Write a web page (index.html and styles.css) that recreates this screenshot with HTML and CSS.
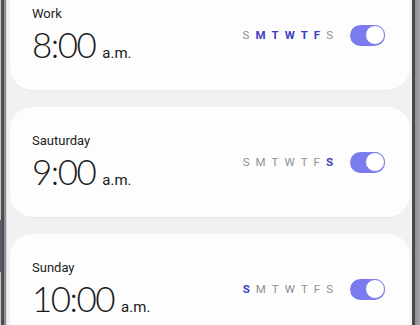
FILE: index.html
```html
<!doctype html>
<html>
<head>
    <meta charset="utf-8">
    <meta name="viewport" content="width=device-width, initial-scale=1">
    <title>Alarms</title>
    <link rel="stylesheet" href="styles.css">
</head>
<body>
    <div class="phone">
        <div class="bezel bezel-left"><div class="side-button"></div></div>

        <div class="screen">
            <div class="alarm-list">
                <div class="alarm">
                    <div class="info">
                        <div class="label">Work</div>
                        <div class="time">8:00<span class="ampm">a.m.</span></div>
                    </div>
                    <div class="repeat">
                        <div class="days">
                            <span>S</span>
                            <span class="on">M</span>
                            <span class="on">T</span>
                            <span class="on">W</span>
                            <span class="on">T</span>
                            <span class="on">F</span>
                            <span>S</span>
                        </div>
                        <div class="toggle"><div class="thumb"></div></div>
                    </div>
                </div>

                <div class="alarm">
                    <div class="info">
                        <div class="label">Sauturday</div>
                        <div class="time">9:00<span class="ampm">a.m.</span></div>
                    </div>
                    <div class="repeat">
                        <div class="days">
                            <span>S</span>
                            <span>M</span>
                            <span>T</span>
                            <span>W</span>
                            <span>T</span>
                            <span>F</span>
                            <span class="on">S</span>
                        </div>
                        <div class="toggle"><div class="thumb"></div></div>
                    </div>
                </div>

                <div class="alarm">
                    <div class="info">
                        <div class="label">Sunday</div>
                        <div class="time">10:00<span class="ampm">a.m.</span></div>
                    </div>
                    <div class="repeat">
                        <div class="days">
                            <span class="on">S</span>
                            <span>M</span>
                            <span>T</span>
                            <span>W</span>
                            <span>T</span>
                            <span>F</span>
                            <span>S</span>
                        </div>
                        <div class="toggle"><div class="thumb"></div></div>
                    </div>
                </div>
            </div>
        </div>

        <div class="bezel bezel-right"></div>
    </div>
</body>
</html>
```

FILE: styles.css
```css
body {
    margin: 0;
    font-family: Roboto, "Noto Sans", sans-serif;
    color: #111;
    background-color: #f1f1f1;
}
.phone {
    display: flex;
    height: 325px;
    overflow: hidden;
}
.bezel {
    flex: none;
    height: 100%;
}
.bezel-left {
    position: relative;
    width: 7px;
    background: linear-gradient(to right, #c9c9cc 0, #c9c9cc 1px, #4d4d53 1px, #4d4d53 4px, #8e8e94 4px, #8e8e94 6px, #d8d8da 6px);
}
.side-button {
    position: absolute;
    left: 0;
    top: 220px;
    width: 2px;
    height: 52px;
    background-color: #5a5a60;
}
.bezel-right {
    width: 8px;
    background: linear-gradient(to right, #48484e 0, #48484e 3px, #8c8c92 3px, #a5a5aa 8px);
}
.screen {
    flex: 1;
    background-color: #f1f1f1;
    padding: 0 2px 0 3px;
}
.alarm-list {
    display: flex;
    flex-direction: column;
    gap: 17px;
    margin-top: -20px;
}
.alarm {
    height: 110px;
    box-sizing: border-box;
    background-color: #fdfdfd;
    border-radius: 22px;
    box-shadow: 0 1px 0 #e8e8e8;
    display: flex;
    align-items: center;
    justify-content: space-between;
    padding: 8px 25px 0 22px;
}
.label {
    font-size: 13px;
    line-height: 16px;
    margin-bottom: 3px;
    color: #222;
}
.time {
    font-family: Lato, Roboto, sans-serif;
    font-size: 35px;
    font-weight: 300;
    line-height: 38px;
    letter-spacing: -1.5px;
    color: #1a1a1a;
}
.ampm {
    font-family: Roboto, "Noto Sans", sans-serif;
    font-size: 15px;
    font-weight: 400;
    letter-spacing: 0;
    margin-left: 7px;
}
.repeat {
    display: flex;
    align-items: center;
    gap: 17px;
    margin-top: -8px;
}
.days {
    display: flex;
    gap: 6px;
    font-size: 11.5px;
    color: #909090;
}
.days .on {
    color: #3d3dc0;
    font-weight: bold;
}
.toggle {
    position: relative;
    width: 35px;
    height: 21px;
    border-radius: 11px;
    background-color: #7b7bf0;
}
.thumb {
    position: absolute;
    right: 0;
    top: 0;
    width: 18px;
    height: 18px;
    border: 1.5px solid #7b7bf0;
    border-radius: 50%;
    background-color: #fff;
}
```
